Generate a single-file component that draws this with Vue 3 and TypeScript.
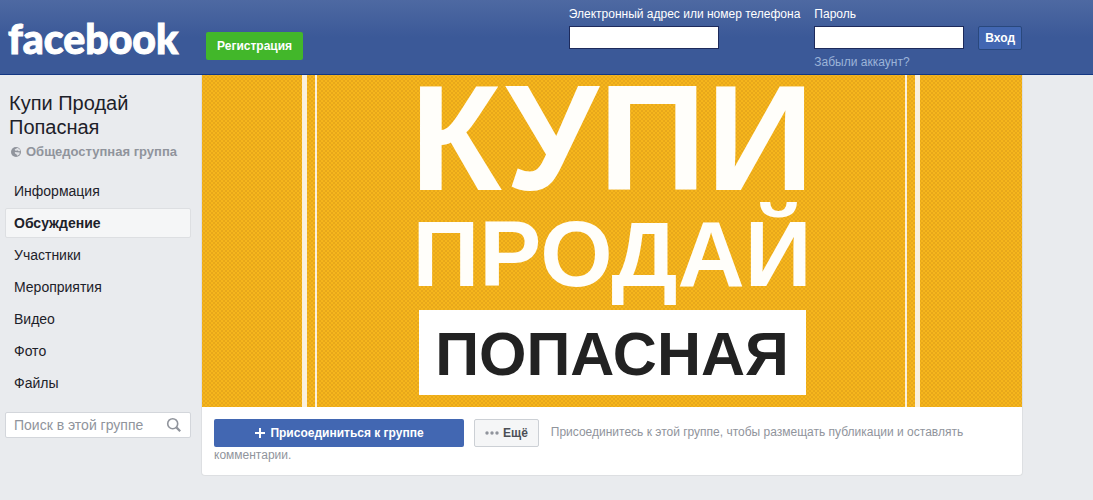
<script setup lang="ts">
import { ref } from 'vue'

interface NavItem {
  id: string
  label: string
}

const items: NavItem[] = [
  { id: 'about', label: 'Информация' },
  { id: 'discussion', label: 'Обсуждение' },
  { id: 'members', label: 'Участники' },
  { id: 'events', label: 'Мероприятия' },
  { id: 'videos', label: 'Видео' },
  { id: 'photos', label: 'Фото' },
  { id: 'files', label: 'Файлы' },
]

const active = ref<string>('discussion')
const email = ref<string>('')
const password = ref<string>('')
const query = ref<string>('')
</script>

<template>
  <div class="page">
    <header class="topbar">
      <div class="topbar-inner">
        <a class="logo" href="#">facebook</a>
        <button class="signup" type="button">Регистрация</button>
        <form class="login" @submit.prevent>
          <div class="field">
            <label for="email">Электронный адрес или номер телефона</label>
            <input id="email" v-model="email" type="text" />
          </div>
          <div class="field">
            <label for="pass">Пароль</label>
            <input id="pass" v-model="password" type="password" />
            <a class="forgot" href="#">Забыли аккаунт?</a>
          </div>
          <button class="enter" type="submit">Вход</button>
        </form>
      </div>
    </header>

    <div class="body">
      <aside class="sidebar">
        <h1>Купи Продай Попасная</h1>
        <div class="privacy">
          <svg width="12" height="12" viewBox="0 0 12 12" aria-hidden="true">
            <circle cx="6" cy="6" r="5" fill="#90949c" />
            <path d="M4.6 3.4 7.6 1.8 9.8 3.4 10.4 5 8.6 5.2 7.4 4.2 5.8 5ZM4.8 6 9.8 6.4 9.4 8.6 7.2 9.8 6.4 8.2 5 7.6Z" fill="#dfe1e5" />
          </svg>
          <span>Общедоступная группа</span>
        </div>
        <nav>
          <a
            v-for="item in items"
            :key="item.id"
            :href="'#' + item.id"
            :class="{ active: item.id === active }"
            @click="active = item.id"
          >{{ item.label }}</a>
        </nav>
        <form class="search" role="search" @submit.prevent>
          <input v-model="query" type="text" placeholder="Поиск в этой группе" aria-label="Поиск в этой группе" />
          <button type="submit" aria-label="Найти">
            <svg width="16" height="16" viewBox="0 0 16 16" fill="none" stroke="#90949c" aria-hidden="true">
              <circle cx="6.7" cy="6.7" r="5" stroke-width="1.6" />
              <path d="M10.4 10.4 14.2 14.2" stroke-width="2.2" />
            </svg>
          </button>
        </form>
      </aside>

      <main class="card">
        <svg class="cover" viewBox="0 0 820 332" role="img" aria-label="Купи Продай Попасная">
          <defs>
            <pattern id="weave" width="4" height="4" patternUnits="userSpaceOnUse">
              <rect width="4" height="4" fill="#f6b61c" />
              <path d="M0 0 4 4M4 0 0 4" stroke="#e5a41a" stroke-width="0.8" />
            </pattern>
          </defs>
          <rect width="820" height="332" fill="url(#weave)" />
          <g fill="#faf0dc">
            <rect x="100" width="5" height="332" />
            <rect x="113" width="2" height="332" />
            <rect x="703" width="2" height="332" />
            <rect x="713" width="5" height="332" />
          </g>
          <g class="big" fill="#fffefa" text-anchor="middle">
            <text x="410" y="115" font-size="150">КУПИ</text>
            <text x="410" y="211" font-size="93">ПРОДАЙ</text>
          </g>
          <rect x="217" y="235" width="387" height="85" fill="#fff" />
          <text class="big" x="410" y="300" font-size="61" fill="#222" text-anchor="middle">ПОПАСНАЯ</text>
        </svg>
        <div class="actions">
          <button class="join" type="button">
            <svg width="12" height="12" viewBox="0 0 12 12" aria-hidden="true">
              <path d="M6 1V11M1 6H11" stroke="#fff" stroke-width="2" />
            </svg>
            <span>Присоединиться к группе</span>
          </button>
          <button class="more" type="button">
            <svg width="14" height="4" viewBox="0 0 14 4" fill="#90949c" aria-hidden="true">
              <circle cx="2" cy="2" r="1.7" />
              <circle cx="7" cy="2" r="1.7" />
              <circle cx="12" cy="2" r="1.7" />
            </svg>
            <span>Ещё</span>
          </button>
          <span class="hint">Присоединитесь к этой группе, чтобы размещать публикации и оставлять комментарии.</span>
        </div>
      </main>
    </div>
  </div>
</template>

<style>
body {
  background: #e9ebee;
}
</style>

<style scoped>
.page {
  min-height: 100vh;
  background: #e9ebee;
  color: #1d2129;
  font-family: "Liberation Sans", Arial, sans-serif;
  font-size: 12px;
}
.page * {
  box-sizing: border-box;
}
a {
  color: inherit;
  text-decoration: none;
}
button,
input {
  font-family: inherit;
  margin: 0;
}
.topbar {
  background: linear-gradient(#4e69a2, #3b5998 50%);
  border-bottom: 1px solid #133783;
}
.topbar-inner {
  display: flex;
  align-items: flex-start;
  max-width: 1022px;
  height: 74px;
  padding-left: 8px;
}
.logo {
  width: 198px;
  margin-top: 13px;
  color: #fff;
  font-family: Lato, "Open Sans", sans-serif;
  font-size: 41px;
  font-weight: 900;
  line-height: 52px;
  -webkit-text-stroke: 1px #fff;
}
.signup {
  height: 28px;
  margin-top: 32px;
  padding: 0 11px;
  border: 0;
  border-radius: 2px;
  background: #42b72a;
  color: #fff;
  font-size: 12px;
  font-weight: 700;
}
.login {
  display: flex;
  align-items: flex-start;
  margin-left: auto;
}
.field {
  display: flex;
  flex-direction: column;
  margin-right: 14px;
  padding-top: 6px;
}
.field label {
  height: 20px;
  color: #fff;
  line-height: 16px;
}
.field input {
  width: 150px;
  height: 23px;
  padding: 3px;
  border: 1px solid #1d2a5b;
  background: #fff;
  font-size: 12px;
}
.forgot {
  padding-top: 5px;
  color: #9cb4d8;
  line-height: 16px;
}
.enter {
  height: 24px;
  margin-top: 26px;
  padding: 0 6px;
  border: 1px solid #29487d;
  border-radius: 2px;
  background: #4267b2;
  color: #fff;
  font-size: 12px;
  font-weight: 700;
}
.body {
  display: flex;
  align-items: flex-start;
  gap: 10px;
  max-width: 1023px;
  padding-left: 5px;
  box-sizing: border-box;
}
.sidebar {
  flex: none;
  width: 186px;
  padding-top: 16px;
}
h1 {
  margin: 0;
  padding: 0 40px 0 4px;
  font-size: 20px;
  font-weight: 400;
  line-height: 24px;
}
.privacy {
  display: flex;
  align-items: center;
  gap: 4px;
  padding-left: 5px;
  color: #90949c;
  font-size: 13px;
  font-weight: 700;
  line-height: 26px;
  white-space: nowrap;
}
nav {
  display: flex;
  flex-direction: column;
  gap: 2px;
  padding-top: 11px;
}
nav a {
  padding: 0 8px;
  border: 1px solid transparent;
  border-radius: 2px;
  font-size: 14px;
  line-height: 28px;
}
nav a.active {
  border-color: #dddfe2;
  background: #f5f6f7;
  font-weight: 700;
}
.search {
  display: flex;
  align-items: center;
  height: 26px;
  margin-top: 14px;
  border: 1px solid #d3d6db;
  border-radius: 2px;
  background: #fff;
}
.search input {
  flex: 1;
  width: 0;
  min-width: 0;
  padding: 0 0 0 8px;
  border: 0;
  background: transparent;
  font-size: 14px;
}
.search input::placeholder {
  color: #90949c;
}
.search button {
  display: flex;
  padding: 0 8px;
  border: 0;
  background: transparent;
}
.card {
  flex: 1;
  min-width: 0;
  border: 1px solid #dddfe2;
  border-top: 0;
  border-radius: 0 0 4px 4px;
  background: #fff;
}
.cover {
  display: block;
  width: 100%;
}
.big {
  font-family: "Liberation Sans", Arial, sans-serif;
  font-weight: 700;
}
.actions {
  padding: 12px;
  color: #90949c;
  line-height: 16px;
}
.join,
.more {
  display: inline-flex;
  align-items: center;
  justify-content: center;
  gap: 4px;
  height: 28px;
  border-radius: 2px;
  font-size: 12px;
  font-weight: 700;
  vertical-align: middle;
}
.join {
  width: 250px;
  margin-right: 10px;
  border: 0;
  background: #4267b2;
  color: #fff;
}
.more {
  margin-right: 12px;
  padding: 0 10px;
  border: 1px solid #ccd0d5;
  background: #f5f6f7;
  color: #4b4f56;
}
</style>
